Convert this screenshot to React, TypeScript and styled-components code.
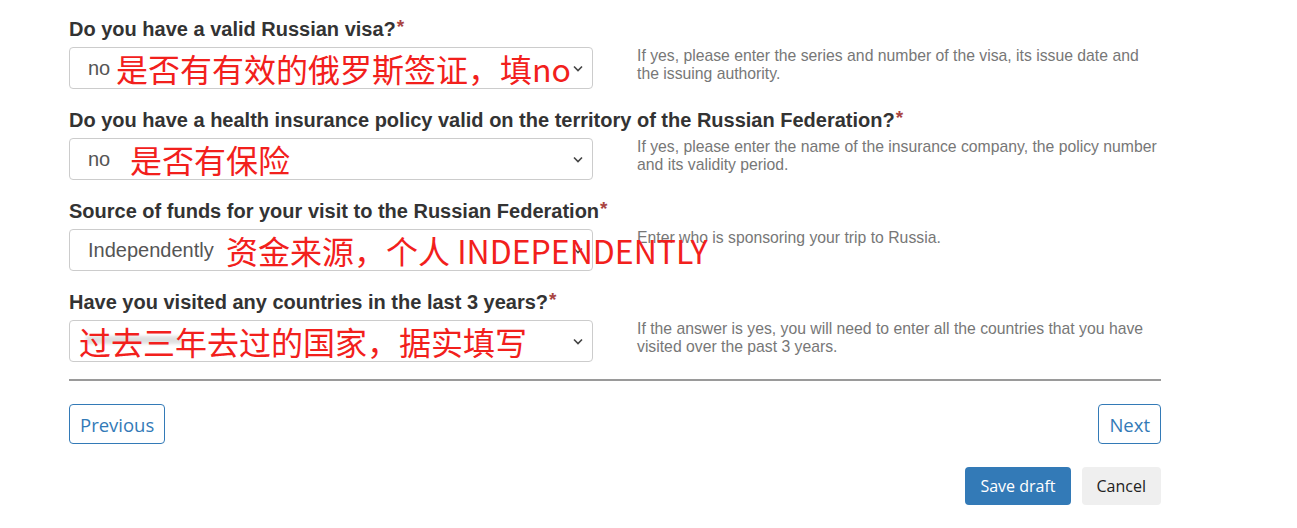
import styled, { createGlobalStyle } from 'styled-components';

const GlobalStyle = createGlobalStyle`
	html, body {
		margin: 0;
		padding: 0;
		background: #fff;
	}
	body {
		font-family: 'Liberation Sans', Arial, sans-serif;
		color: #333;
	}
`;

const Page = styled.div`
	width: 1092px;
	padding: 19px 0 0 69px;
`;

const Questions = styled.div`
	display: flex;
	flex-direction: column;
	gap: 21px;
`;

const Row = styled.div``;

const Label = styled.div`
	font-size: 20px;
	line-height: 20px;
	height: 20px;
	font-weight: bold;
	color: #333;
	margin-bottom: 8px;
	white-space: nowrap;
`;

const Required = styled.span`
	color: #a94442;
	font-size: 19px;
	line-height: 0;
	position: relative;
	top: -3px;
	margin-left: 1px;
`;

const Field = styled.div`
	display: grid;
	grid-template-columns: 524px 1fr;
	column-gap: 44px;
	align-items: start;
`;

const SelectBox = styled.div`
	position: relative;
	box-sizing: border-box;
	height: 42px;
	border: 1px solid #ccc;
	border-radius: 4px;
	display: flex;
	align-items: center;
	justify-content: space-between;
	padding: 0 8px 0 18px;
	font-size: 20px;
	color: #555;
`;

const Chevron = styled.svg`
	width: 12px;
	height: 12px;
	flex: none;
`;

const Annotation = styled.span<{ $left: number }>`
	position: absolute;
	left: ${(p) => p.$left}px;
	top: 50%;
	transform: translateY(-50%);
	font-family: 'Noto Sans CJK SC', 'Noto Sans', sans-serif;
	font-size: 32px;
	line-height: 1;
	color: #f2201c;
	white-space: nowrap;
	pointer-events: none;
`;

const Smudge = styled.span`
	position: absolute;
	left: 16px;
	top: 15px;
	width: 96px;
	height: 8px;
	background: #d8d8d8;
	filter: blur(1.5px);
	opacity: 0.8;
`;

const Help = styled.div`
	font-size: 15.75px;
	line-height: 18px;
	color: #777;
`;

const Divider = styled.hr`
	border: none;
	border-top: 2px solid #9a9a9a;
	margin: 17px 0 23px;
`;

const Nav = styled.div`
	display: flex;
	justify-content: space-between;
	margin-bottom: 23px;
`;

const OutlineButton = styled.button`
	height: 40px;
	padding: 0 10px;
	background: #fff;
	border: 1px solid #337ab7;
	border-radius: 4px;
	color: #337ab7;
	font-family: 'Open Sans', 'Noto Sans', sans-serif;
	font-size: 18.5px;
	cursor: pointer;
`;

const Actions = styled.div`
	display: flex;
	justify-content: flex-end;
	gap: 11px;
`;

const ActionButton = styled.button<{ $primary?: boolean }>`
	height: 38px;
	padding: 0 15px;
	border: none;
	border-radius: 4px;
	background: ${(p) => (p.$primary ? '#337ab7' : '#efefef')};
	color: ${(p) => (p.$primary ? '#fff' : '#222')};
	font-family: 'Open Sans', 'Noto Sans', sans-serif;
	font-size: 16px;
	cursor: pointer;
`;

type Question = {
	label: string;
	value: string;
	note: string;
	noteLeft: number;
	help: string;
	smudge?: boolean;
};

const questions: Question[] = [
	{
		label: 'Do you have a valid Russian visa?',
		value: 'no',
		note: '是否有有效的俄罗斯签证，填no',
		noteLeft: 46,
		help: 'If yes, please enter the series and number of the visa, its issue date and the issuing authority.',
	},
	{
		label: 'Do you have a health insurance policy valid on the territory of the Russian Federation?',
		value: 'no',
		note: '是否有保险',
		noteLeft: 60,
		help: 'If yes, please enter the name of the insurance company, the policy number and its validity period.',
	},
	{
		label: 'Source of funds for your visit to the Russian Federation',
		value: 'Independently',
		note: '资金来源，个人 INDEPENDENTLY',
		noteLeft: 156,
		help: 'Enter who is sponsoring your trip to Russia.',
	},
	{
		label: 'Have you visited any countries in the last 3 years?',
		value: '',
		note: '过去三年去过的国家，据实填写',
		noteLeft: 9,
		help: 'If the answer is yes, you will need to enter all the countries that you have visited over the past 3 years.',
		smudge: true,
	},
];

export default function App() {
	return (
		<>
			<GlobalStyle />
			<Page>
				<Questions>
					{questions.map((q, i) => (
						<Row key={i}>
							<Label>
								{q.label}
								<Required>*</Required>
							</Label>
							<Field>
								<SelectBox>
									<span>{q.value}</span>
									<Chevron viewBox="0 0 12 12">
										<path d="M2 4.5 L6 8.5 L10 4.5" fill="none" stroke="#444" strokeWidth="1.6" />
									</Chevron>
									{q.smudge && <Smudge />}
									<Annotation $left={q.noteLeft}>{q.note}</Annotation>
								</SelectBox>
								<Help>{q.help}</Help>
							</Field>
						</Row>
					))}
				</Questions>
				<Divider />
				<Nav>
					<OutlineButton>Previous</OutlineButton>
					<OutlineButton>Next</OutlineButton>
				</Nav>
				<Actions>
					<ActionButton $primary>Save draft</ActionButton>
					<ActionButton>Cancel</ActionButton>
				</Actions>
			</Page>
		</>
	);
}
